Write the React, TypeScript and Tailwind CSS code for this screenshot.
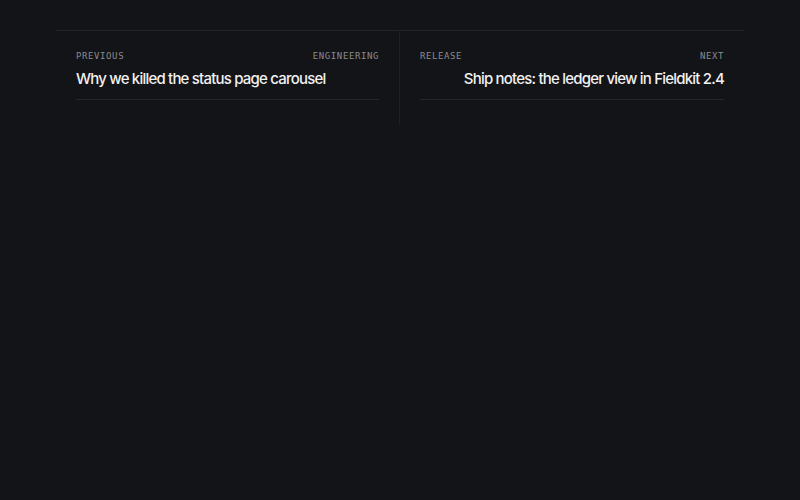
const posts = [
  {
    side: "left",
    label: "Previous",
    tag: "Engineering",
    title: "Why we killed the status page carousel",
  },
  {
    side: "right",
    label: "Next",
    tag: "Release",
    title: "Ship notes: the ledger view in Fieldkit 2.4",
  },
];

const mono = "font-['DejaVu_Sans_Mono','Liberation_Mono',monospace]";

export default function App() {
  return (
    <div className="min-h-[500px] w-full bg-[#131417] pt-[30px] font-['Inter','Noto_Sans',sans-serif]">
      <nav className="mx-auto grid w-[688px] grid-cols-2 border-t border-[#222327]">
        {posts.map((p) => (
          <a
            key={p.label}
            href="#"
            className={`block px-5 pt-[19px] pb-6 ${p.side === "left" ? "border-r border-[#1f2024]" : ""}`}
          >
            <div className="border-b border-[#25262a] pb-[10px]">
              <div
                className={`flex items-center justify-between text-[9px] leading-3 uppercase tracking-[0.6px] text-[#8a8b8f] ${mono}`}
              >
                {p.side === "left" ? (
                  <>
                    <span>{p.label}</span>
                    <span>{p.tag}</span>
                  </>
                ) : (
                  <>
                    <span>{p.tag}</span>
                    <span>{p.label}</span>
                  </>
                )}
              </div>
              <div
                className={`mt-[7px] text-[15px] leading-5 font-medium tracking-[-0.8px] text-[#f1f1f2] ${p.side === "right" ? "text-right" : ""}`}
              >
                {p.title}
              </div>
            </div>
          </a>
        ))}
      </nav>
    </div>
  );
}
